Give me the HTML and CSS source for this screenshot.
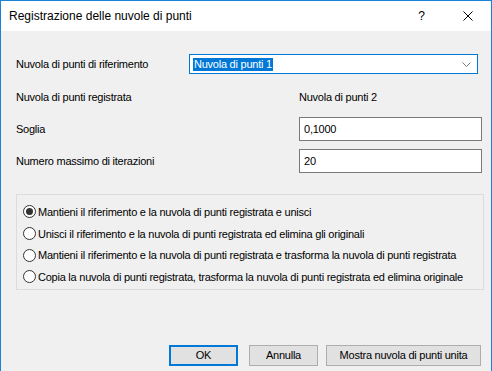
FILE: index.html
```html
<!DOCTYPE html>
<html lang="it">
<head>
  <meta charset="UTF-8" />
  <title>Registrazione delle nuvole di punti</title>
  <link rel="stylesheet" href="styles.css">
</head>
<body>
  <div class="dialog">
    <div class="titlebar">
      <span class="title">Registrazione delle nuvole di punti</span>
      <span class="help">?</span>
      <span class="close">
        <svg width="10" height="10" viewBox="0 0 10 10"><path d="M0.5 0.5 L9.5 9.5 M9.5 0.5 L0.5 9.5" stroke="#000" stroke-width="1" fill="none"/></svg>
      </span>
    </div>

    <div class="content">
      <div class="row row-ref">
        <label class="label">Nuvola di punti di riferimento</label>
        <div class="combo">
          <span class="combo-text">Nuvola di punti 1</span>
          <svg class="chevron" width="9" height="5" viewBox="0 0 9 5"><path d="M0.5 0.5 L4.5 4.5 L8.5 0.5" stroke="#7a7a7a" stroke-width="1" fill="none"/></svg>
        </div>
      </div>

      <div class="row row-reg">
        <label class="label">Nuvola di punti registrata</label>
        <span class="value">Nuvola di punti 2</span>
      </div>

      <div class="row row-soglia">
        <label class="label">Soglia</label>
        <div class="textbox">0,1000</div>
      </div>

      <div class="row row-iter">
        <label class="label">Numero massimo di iterazioni</label>
        <div class="textbox">20</div>
      </div>

      <div class="groupbox">
        <div class="option"><span class="radio checked"></span>Mantieni il riferimento e la nuvola di punti registrata e unisci</div>
        <div class="option"><span class="radio"></span>Unisci il riferimento e la nuvola di punti registrata ed elimina gli originali</div>
        <div class="option"><span class="radio"></span>Mantieni il riferimento e la nuvola di punti registrata e trasforma la nuvola di punti registrata</div>
        <div class="option"><span class="radio"></span>Copia la nuvola di punti registrata, trasforma la nuvola di punti registrata ed elimina originale</div>
      </div>

      <div class="buttons">
        <button class="btn btn-ok">OK</button>
        <button class="btn btn-cancel">Annulla</button>
        <button class="btn btn-show">Mostra nuvola di punti unita</button>
      </div>
    </div>
  </div>
</body>
</html>
```

FILE: styles.css
```css
body {
  margin: 0;
  padding: 0;
  font-family: "Liberation Sans", Arial, sans-serif;
  font-size: 11px;
  color: #000;
  background: #f0f0f0;
}

.dialog {
  width: 492px;
  height: 372px;
  box-sizing: border-box;
  border: 1px solid #1883d7;
  background: #f0f0f0;
  display: flex;
  flex-direction: column;
  overflow: hidden;
}

.titlebar {
  height: 30px;
  background: #fff;
  display: flex;
  align-items: center;
  padding-left: 8px;
}

.title {
  font-size: 12px;
  flex: 1;
}

.help {
  font-size: 12px;
  margin-right: 38px;
}

.close {
  display: flex;
  margin-right: 18px;
}

.content {
  flex: 1;
  padding: 23px 0 0 15px;
  display: flex;
  flex-direction: column;
  letter-spacing: -0.24px;
}

.row {
  display: flex;
  align-items: center;
}

.label {
  width: 173px;
  flex-shrink: 0;
}

.row-ref {
  height: 20px;
}

.row-reg {
  height: 20px;
  margin-top: 13px;
}

.row-soglia {
  height: 24px;
  margin-top: 10px;
}

.row-iter {
  height: 24px;
  margin-top: 8px;
}

.combo {
  width: 289px;
  height: 20px;
  box-sizing: border-box;
  border: 1px solid #0078d7;
  background: #fff;
  display: flex;
  align-items: center;
  padding-left: 3px;
}

.combo-text {
  background: #0078d7;
  color: #fff;
  padding: 0 1px;
  line-height: 13px;
  flex: none;
}

.chevron {
  margin-left: auto;
  margin-right: 6px;
}

.value,
.textbox {
  margin-left: 110px;
}

.textbox {
  width: 183px;
  height: 24px;
  box-sizing: border-box;
  border: 1px solid #7a7a7a;
  background: #fff;
  display: flex;
  align-items: center;
  padding-left: 4px;
}

.groupbox {
  width: 468px;
  margin-top: 21px;
  box-sizing: border-box;
  border: 1px solid #dcdcdc;
  padding: 6px 0 1px 6px;
}

.option {
  height: 21.7px;
  display: flex;
  align-items: center;
}

.radio {
  width: 13px;
  height: 13px;
  box-sizing: border-box;
  border: 1px solid #333;
  border-radius: 50%;
  background: #fff;
  margin-right: 2px;
  display: flex;
  align-items: center;
  justify-content: center;
  flex: none;
}

.radio.checked::after {
  content: "";
  width: 7px;
  height: 7px;
  border-radius: 50%;
  background: #333;
}

.buttons {
  display: flex;
  justify-content: flex-end;
  gap: 8px;
  margin-top: 55px;
  padding-right: 10px;
}

.btn {
  height: 21px;
  box-sizing: border-box;
  border: 1px solid #adadad;
  background: #e1e1e1;
  font-family: inherit;
  font-size: 11px;
  letter-spacing: -0.24px;
  color: #000;
  padding: 0;
}

.btn-ok {
  width: 69px;
  border: 2px solid #0078d7;
  margin-right: 3px;
}

.btn-cancel {
  width: 69px;
}

.btn-show {
  width: 155px;
}
```
